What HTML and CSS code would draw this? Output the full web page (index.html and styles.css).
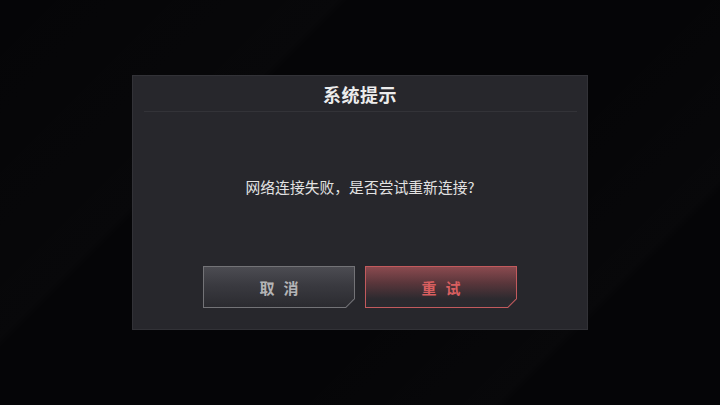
FILE: index.html
```html
<!DOCTYPE html>
<html lang="zh">
<head>
<meta charset="utf-8">
<title>系统提示</title>
<link rel="stylesheet" href="styles.css">
</head>
<body>
<div class="screen">
  <div class="dialog">
    <div class="dialog-header">系统提示</div>
    <div class="divider"></div>
    <div class="dialog-message">网络连接失败，是否尝试重新连接?</div>
    <div class="dialog-actions">
      <div class="btn btn-cancel"><div class="btn-inner">取消</div></div>
      <div class="btn btn-retry"><div class="btn-inner">重试</div></div>
    </div>
  </div>
</div>
</body>
</html>
```

FILE: styles.css
```css
html, body {
  margin: 0;
  padding: 0;
  width: 720px;
  height: 405px;
  overflow: hidden;
  background: #050507;
  font-family: "Noto Sans CJK SC", "Noto Sans", sans-serif;
}

.screen {
  width: 720px;
  height: 405px;
  display: flex;
  align-items: center;
  justify-content: center;
  background:
    linear-gradient(135deg, rgba(255,255,255,0) 0%, rgba(255,255,255,0.012) 30%, rgba(255,255,255,0) 31%, rgba(255,255,255,0) 60%, rgba(255,255,255,0.012) 80%, rgba(255,255,255,0) 81%),
    #050507;
}

.dialog {
  box-sizing: border-box;
  width: 456px;
  height: 255px;
  background: #27272c;
  border: 1px solid #323237;
  display: flex;
  flex-direction: column;
}

.dialog-header {
  height: 35px;
  display: flex;
  align-items: center;
  justify-content: center;
  color: #ececec;
  font-size: 18px;
  font-weight: 700;
  letter-spacing: 0.5px;
}

.divider {
  height: 1px;
  margin: 0 10px 0 11px;
  background: #333338;
}

.dialog-message {
  margin-top: 65px;
  height: 20px;
  line-height: 20px;
  text-align: center;
  color: #e2e2e2;
  font-size: 14.8px;
}

.dialog-actions {
  margin-top: 69px;
  display: flex;
  justify-content: center;
  gap: 10px;
}

.btn {
  box-sizing: border-box;
  width: 152px;
  height: 42px;
  padding: 1px;
  clip-path: polygon(0 0, 100% 0, 100% calc(100% - 9px), calc(100% - 9px) 100%, 0 100%);
}

.btn-inner {
  height: 40px;
  display: flex;
  align-items: center;
  justify-content: center;
  font-size: 15px;
  font-weight: 700;
  letter-spacing: 9px;
  text-indent: 9px;
  clip-path: polygon(0 0, 100% 0, 100% calc(100% - 8.4px), calc(100% - 8.4px) 100%, 0 100%);
}

.btn-cancel {
  background: #737377;
}

.btn-cancel .btn-inner {
  background: linear-gradient(180deg, #4c4c52 0%, #3a3a40 45%, #2b2b30 100%);
  color: #b4b4b6;
}

.btn-retry {
  background: #c25a5d;
}

.btn-retry .btn-inner {
  background: linear-gradient(180deg, #8a4a4f 0%, #5a363b 40%, #2c2a2f 80%, #2a2a2f 100%);
  color: #d95f60;
}
```
